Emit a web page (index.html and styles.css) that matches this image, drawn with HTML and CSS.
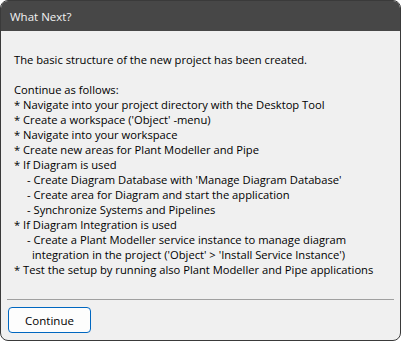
FILE: index.html
```html
<!DOCTYPE html>
<html lang="en">

<head>
    <meta charset="UTF-8">
    <meta name="viewport" content="width=device-width, initial-scale=1.0">
    <title>What Next?</title>
    <link rel="stylesheet" href="styles.css">
</head>

<body>
    <div class="window">
        <div class="titlebar">What Next?</div>
        <div class="content">
            <div class="line">The basic structure of the new project has been created.</div>
            <div class="line blank"></div>
            <div class="line">Continue as follows:</div>
            <div class="line">* Navigate into your project directory with the Desktop Tool</div>
            <div class="line">* Create a workspace ('Object' -menu)</div>
            <div class="line">* Navigate into your workspace</div>
            <div class="line">* Create new areas for Plant Modeller and Pipe</div>
            <div class="line">* If Diagram is used</div>
            <div class="line sub">- Create Diagram Database with 'Manage Diagram Database'</div>
            <div class="line sub">- Create area for Diagram and start the application</div>
            <div class="line sub">- Synchronize Systems and Pipelines</div>
            <div class="line">* If Diagram Integration is used</div>
            <div class="line sub">- Create a Plant Modeller service instance to manage diagram</div>
            <div class="line wrap">integration in the project ('Object' &gt; 'Install Service Instance')</div>
            <div class="line">* Test the setup by running also Plant Modeller and Pipe applications</div>
        </div>
        <div class="footer">
            <button class="btn">Continue</button>
        </div>
    </div>
</body>

</html>
```

FILE: styles.css
```css
body {
    margin: 0;
    font-family: "Open Sans", "Noto Sans", sans-serif;
    font-size: 12px;
}

.window {
    width: 401px;
    height: 341px;
    box-sizing: border-box;
    border: 1px solid #3a3a3a;
    border-radius: 8px;
    overflow: hidden;
    background-color: #f0f0f0;
    display: flex;
    flex-direction: column;
}

.titlebar {
    height: 30px;
    background-color: #474747;
    color: #f2f2f2;
    display: flex;
    align-items: center;
    padding-left: 9px;
    font-size: 11.5px;
}

.content {
    flex: 1;
    padding: 21px 10px 0 13px;
    color: #000;
    font-size: 11.2px;
}

.line {
    height: 15px;
    line-height: 15px;
    white-space: nowrap;
}

.sub {
    padding-left: 13px;
}

.wrap {
    padding-left: 18px;
}

.footer {
    margin: 0 6px 0 6px;
    border-top: 1px solid #a0a0a0;
    padding: 7px 0 7px 1px;
}

.btn {
    width: 83px;
    height: 26px;
    background-color: #fdfdfd;
    border: 1px solid #0067c0;
    border-radius: 4px;
    font-family: inherit;
    font-size: 11.5px;
    color: #000;
    padding: 0;
}
```
